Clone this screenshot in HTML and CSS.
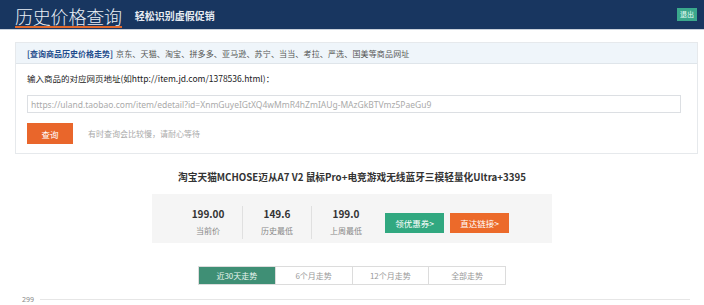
FILE: index.html
```html
<!DOCTYPE html>
<html lang="zh-CN">
<head>
    <meta charset="UTF-8">
    <meta name="viewport" content="width=device-width, initial-scale=1.0">
    <title>历史价格查询</title>
    <link rel="stylesheet" href="styles.css">
</head>
<body>
    <!-- 顶部导航 -->
    <div class="top-bar">
        <div class="logo">历史价格查询</div>
        <div class="slogan">轻松识别虚假促销</div>
        <a href="#" class="logout-button">退出</a>
    </div>

    <!-- 查询表单 -->
    <div class="search-box">
        <div class="search-head">
            <span class="search-title">[查询商品历史价格走势]</span>
            <span class="search-sites">京东、天猫、淘宝、拼多多、亚马逊、苏宁、当当、考拉、严选、国美等商品网址</span>
        </div>
        <div class="search-body">
            <label for="url">输入商品的对应网页地址(如http://item.jd.com/1378536.html)：</label>
            <input type="text" id="url" placeholder="https://uland.taobao.com/item/edetail?id=XnmGuyeIGtXQ4wMmR4hZmIAUg-MAzGkBTVmz5PaeGu9">
            <div class="search-actions">
                <button class="search-button">查询</button>
                <span class="search-hint">有时查询会比较慢，请耐心等待</span>
            </div>
        </div>
    </div>

    <!-- 商品信息 -->
    <div class="product-title">淘宝天猫MCHOSE迈从A7 V2 鼠标Pro+电竞游戏无线蓝牙三模轻量化Ultra+3395</div>
    <div class="price-box">
        <div class="price-item">
            <div class="price-value">199.00</div>
            <div class="price-label">当前价</div>
        </div>
        <div class="price-item">
            <div class="price-value">149.6</div>
            <div class="price-label">历史最低</div>
        </div>
        <div class="price-item">
            <div class="price-value">199.0</div>
            <div class="price-label">上周最低</div>
        </div>
        <a href="#" class="coupon-button">领优惠券&gt;</a>
        <a href="#" class="link-button">直达链接&gt;</a>
    </div>

    <!-- 走势切换 -->
    <div class="tabs">
        <div class="tab active">近30天走势</div>
        <div class="tab">6个月走势</div>
        <div class="tab">12个月走势</div>
        <div class="tab">全部走势</div>
    </div>

    <div class="chart">
        <span class="chart-label">299</span>
        <div class="chart-line"></div>
    </div>
</body>
</html>
```

FILE: styles.css
```css
body {
    font-family: "Noto Sans CJK SC", "Noto Sans", sans-serif;
    background-color: #ffffff;
    margin: 0;
    color: #333;
}
.top-bar {
    background-color: #183660;
    height: 29px;
    border-bottom: 1px solid #c8d0da;
    padding: 0 7px 0 15px;
    display: flex;
    align-items: center;
}
.logo {
    color: #e9eef5;
    font-size: 18px;
    font-weight: 300;
    line-height: 20px;
    padding-top: 1px;
    border-bottom: 2px solid #e0682c;
    margin-top: 4px;
    letter-spacing: -0.2px;
}
.slogan {
    color: #e6ebf2;
    font-size: 10px;
    font-weight: bold;
    margin-left: 13px;
    margin-top: 1px;
}
.logout-button {
    margin-left: auto;
    background-color: #3aa88c;
    color: #e8fff6;
    font-size: 7px;
    line-height: 13px;
    padding: 0 3px;
    text-decoration: none;
}
.search-box {
    margin: 12px 6px 0 15px;
    border: 1px solid #e6e9ec;
}
.search-head {
    background-color: #eff5fa;
    border-bottom: 1px solid #dfe5ea;
    height: 20px;
    padding-left: 11px;
    display: flex;
    align-items: center;
    font-size: 8px;
}
.search-title {
    color: #1f4c8c;
    font-weight: bold;
    margin-right: 3px;
}
.search-sites {
    color: #555;
    letter-spacing: 0.15px;
}
.search-body {
    padding: 8px 16px 9px 11px;
}
.search-body label {
    display: block;
    font-size: 8.5px;
    line-height: 12px;
    color: #222;
}
.search-body input {
    display: block;
    box-sizing: border-box;
    width: 100%;
    height: 18px;
    margin-top: 11px;
    padding: 0 3px;
    border: 1px solid #dcdfe3;
    font-family: "Noto Sans", sans-serif;
    font-size: 8.5px;
    color: #999;
}
.search-body input::placeholder {
    color: #aaa;
}
.search-actions {
    display: flex;
    align-items: center;
    margin-top: 10px;
}
.search-button {
    width: 46px;
    height: 21px;
    border: none;
    background-color: #e9662b;
    color: #fff;
    font-family: inherit;
    font-size: 8.5px;
    cursor: pointer;
}
.search-hint {
    margin-left: 15px;
    font-size: 8px;
    color: #aaa;
}
.product-title {
    text-align: center;
    font-size: 9.7px;
    font-weight: bold;
    color: #333;
    margin-top: 16px;
    line-height: 14px;
}
.price-box {
    width: 378px;
    margin: 10px auto 0;
    padding: 12px 0 4px 22px;
    background-color: #f5f5f5;
    display: flex;
    align-items: center;
}
.price-item {
    width: 68px;
    text-align: center;
    border-left: 1px solid #e0e0e0;
}
.price-item:first-child {
    border-left: none;
}
.price-value {
    font-size: 10px;
    font-weight: bold;
    line-height: 16px;
    color: #333;
}
.price-label {
    font-size: 8px;
    line-height: 17px;
    color: #888;
}
.coupon-button, .link-button {
    width: 59px;
    height: 20px;
    line-height: 20px;
    text-align: center;
    color: #fff;
    font-size: 8.5px;
    text-decoration: none;
}
.coupon-button {
    background-color: #31a880;
    margin-left: 5px;
}
.link-button {
    background-color: #ec6a2a;
    margin-left: 6px;
}
.tabs {
    width: 306px;
    margin: 23px auto 0;
    display: flex;
    border: 1px solid #dcdcdc;
}
.tab {
    flex: 1;
    height: 17px;
    line-height: 17px;
    text-align: center;
    font-size: 8px;
    color: #999;
    border-left: 1px solid #dcdcdc;
}
.tab:first-child {
    border-left: none;
}
.tab.active {
    background-color: #3f8f75;
    color: #e8f5ef;
}
.chart {
    display: flex;
    align-items: center;
    padding: 0 14px 0 22px;
    margin-top: 10px;
}
.chart-label {
    font-family: "Noto Sans", sans-serif;
    font-size: 7px;
    line-height: 9px;
    color: #888;
    width: 18px;
}
.chart-line {
    flex: 1;
    height: 1px;
    background-color: #e6e6e6;
}
```
